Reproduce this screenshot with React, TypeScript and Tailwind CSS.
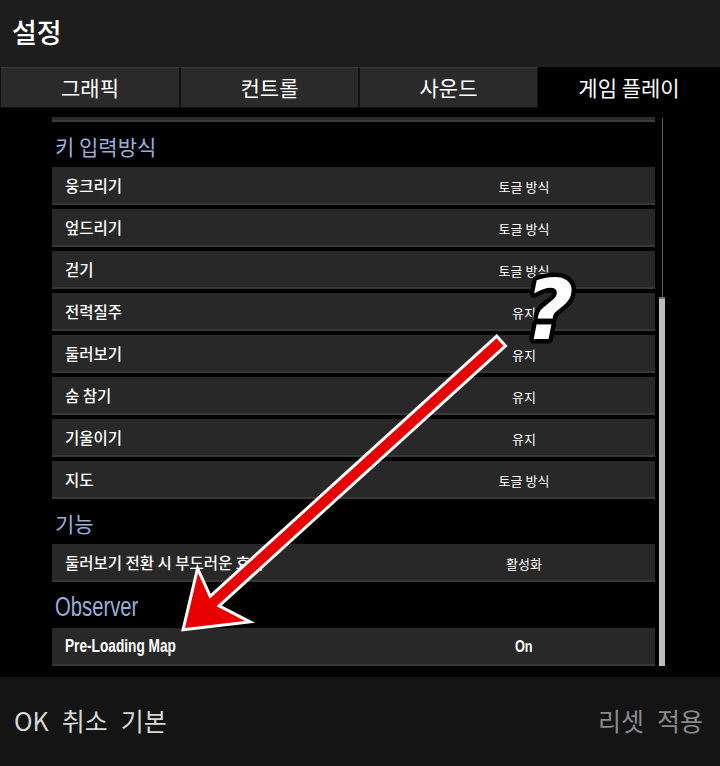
import React from 'react';

interface Row {
  label: string;
  value: string;
  latin?: boolean;
}

const keyRows: Row[] = [
  { label: '웅크리기', value: '토글 방식' },
  { label: '엎드리기', value: '토글 방식' },
  { label: '걷기', value: '토글 방식' },
  { label: '전력질주', value: '유지' },
  { label: '둘러보기', value: '유지' },
  { label: '숨 참기', value: '유지' },
  { label: '기울이기', value: '유지' },
  { label: '지도', value: '토글 방식' },
];

const tabs = [
  { name: '그래픽', w: 'w-[180px]' },
  { name: '컨트롤', w: 'w-[179px]' },
  { name: '사운드', w: 'w-[179px]' },
];

// no condensed face is installed, so squeeze the latin text horizontally
const latinFont = "font-['Liberation_Sans','Arial',sans-serif]";

function SettingRow({ row }: { row: Row }) {
  return (
    <div className="h-[38px] mb-[4px] bg-[#282828] border-b-2 border-[#383838] flex items-center text-white">
      <div className="flex-1 pl-[13px]">
        {row.latin ? (
          <span className={`inline-block origin-left scale-x-[0.72] text-[19px] font-bold ${latinFont}`}>
            {row.label}
          </span>
        ) : (
          <span className="text-[15.5px] font-medium">{row.label}</span>
        )}
      </div>
      <div className="w-[262px] text-center">
        {row.latin ? (
          <span className={`inline-block scale-x-[0.75] text-[17px] font-bold ${latinFont}`}>
            {row.value}
          </span>
        ) : (
          <span className="text-[13px]">{row.value}</span>
        )}
      </div>
    </div>
  );
}

function SectionTitle({ title, latin, h }: { title: string; latin?: boolean; h: string }) {
  return (
    <div className={`${h} flex items-center pl-[3px] text-[#9aaed6]`}>
      {latin ? (
        <span className={`inline-block origin-left scale-x-[0.75] text-[27px] ${latinFont}`}>{title}</span>
      ) : (
        <span className="text-[21px]">{title}</span>
      )}
    </div>
  );
}

export default function App() {
  return (
    <div className="relative w-[720px] h-[766px] flex flex-col overflow-hidden font-['Noto_Sans_CJK_KR','Noto_Sans',sans-serif] bg-black">
      {/* header */}
      <div className="h-[67px] bg-[#1d1d1d] flex items-center pl-[12px] pb-[2px]">
        <span className="text-white text-[27px] font-medium">설정</span>
      </div>

      {/* tabs */}
      <div className="h-[41px] flex bg-black">
        {tabs.map((t) => (
          <div
            key={t.name}
            className={`${t.w} h-full bg-[#2a2a2a] border border-[#111] border-t-[#3a3a3a] flex items-center justify-center text-white text-[21px]`}
          >
            {t.name}
          </div>
        ))}
        <div className="flex-1 h-full bg-black flex items-center justify-center text-white text-[21px]">
          게임 플레이
        </div>
      </div>

      {/* content */}
      <div className="flex-1 flex bg-black pl-[52px] overflow-hidden">
        <div className="w-[603px] pt-[9px] overflow-hidden">
          <div className="h-[5px] mb-[4px] bg-[#2a2a2a] border-b-2 border-[#3a3a3a]" />
          <SectionTitle title="키 입력방식" h="h-[41px]" />
          {keyRows.map((r) => (
            <SettingRow key={r.label} row={r} />
          ))}
          <SectionTitle title="기능" h="h-[41px]" />
          <SettingRow row={{ label: '둘러보기 전환 시 부드러운 효과', value: '활성화' }} />
          <SectionTitle title="Observer" latin h="h-[42px]" />
          <SettingRow row={{ label: 'Pre-Loading Map', value: 'On', latin: true }} />
        </div>
        {/* scrollbar */}
        <div className="ml-[4px] w-[6px] flex flex-col pt-[10px] pb-[11px]">
          <div className="flex-1 w-px mx-auto bg-[#5a5a5a]" />
          <div className="h-[369px] w-[6px] bg-[#bdbdbd] border-t-2 border-[#777]" />
        </div>
      </div>

      {/* footer */}
      <div className="h-[89px] bg-[#141414] flex items-center justify-between pl-[14px] pr-[17px] pb-[2px]">
        <div className="flex gap-[13px] text-[#d8d8d8] text-[25px]">
          <span>OK</span>
          <span>취소</span>
          <span>기본</span>
        </div>
        <div className="flex gap-[13px] text-[#8a8a8a] text-[25px]">
          <span>리셋</span>
          <span>적용</span>
        </div>
      </div>

      {/* annotation overlay */}
      <svg
        className="absolute inset-0 pointer-events-none"
        width="720"
        height="766"
        viewBox="0 0 720 766"
      >
        <polygon
          points="503.4,345.7 216.5,606.2 245,621 185,628 198,573 209.7,598.8 496.6,338.3"
          fill="#e60000"
          stroke="#ffffff"
          strokeWidth="6"
          strokeLinejoin="miter"
          strokeMiterlimit="10"
          paintOrder="stroke"
        />
        <text
          x="525"
          y="339"
          fontSize="84"
          fontWeight="bold"
          fontStyle="italic"
          fontFamily="'DejaVu Sans', sans-serif"
          fill="#ffffff"
          stroke="#000000"
          strokeWidth="9"
          strokeLinejoin="round"
          paintOrder="stroke"
        >
          ?
        </text>
      </svg>
    </div>
  );
}
